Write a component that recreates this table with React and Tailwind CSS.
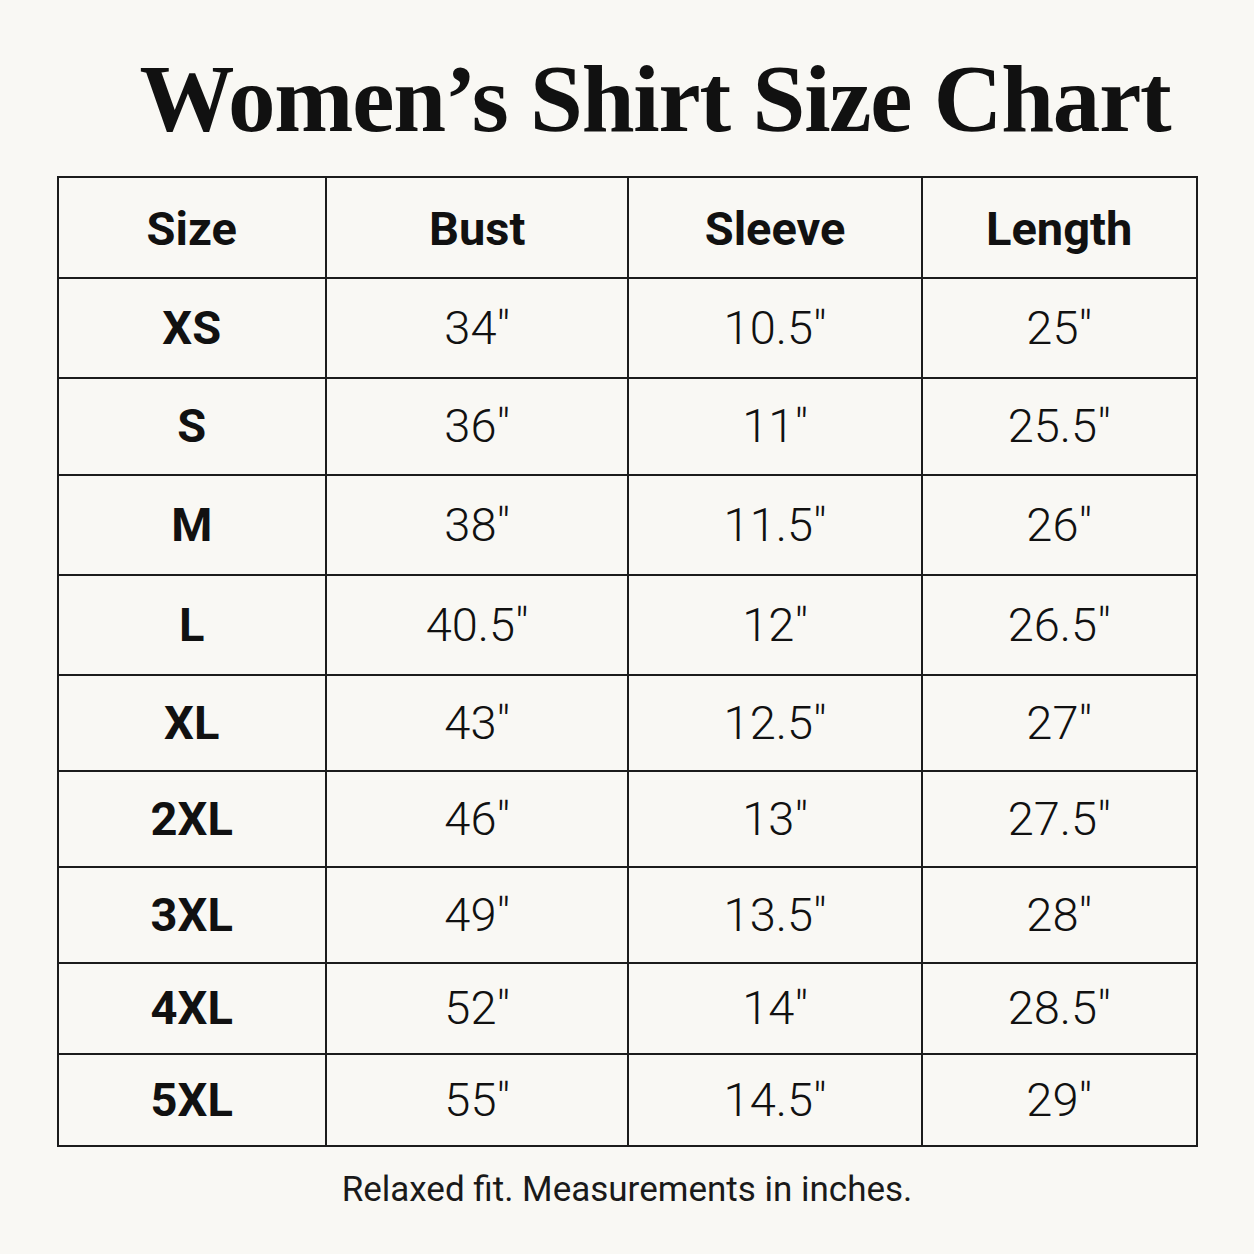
const rows = [
  ['XS', '34″', '10.5″', '25″'],
  ['S', '36″', '11″', '25.5″'],
  ['M', '38″', '11.5″', '26″'],
  ['L', '40.5″', '12″', '26.5″'],
  ['XL', '43″', '12.5″', '27″'],
  ['2XL', '46″', '13″', '27.5″'],
  ['3XL', '49″', '13.5″', '28″'],
  ['4XL', '52″', '14″', '28.5″'],
  ['5XL', '55″', '14.5″', '29″'],
];

const heights = ['h-[100px]', 'h-[97px]', 'h-[100px]', 'h-[100px]', 'h-[96px]', 'h-[96px]', 'h-[96px]', 'h-[91px]', 'h-[92px]'];

export default function App() {
  return (
    <div className="w-[1254px] h-[1254px] bg-[#f9f8f4] text-[#111] flex flex-col items-center">
      <h1
        className="pt-[52px] pl-[56px] text-[95px] leading-none font-bold tracking-[-1.2px]"
        style={{ fontFamily: '"Liberation Serif", serif' }}
      >
        Women’s Shirt Size Chart
      </h1>

      <table
        className="mt-[29px] w-[1141px] border-collapse border-2 border-[#1c1c1c] text-center"
        style={{ fontFamily: 'Roboto, sans-serif' }}
      >
        <colgroup>
          <col className="w-[269px]" />
          <col className="w-[303px]" />
          <col className="w-[294px]" />
          <col className="w-[275px]" />
        </colgroup>
        <thead>
          <tr className="h-[101px] text-[47px] font-bold">
            <th className="border-2 border-[#1c1c1c] pt-[4px] font-bold">Size</th>
            <th className="border-2 border-[#1c1c1c] pt-[4px] font-bold">Bust</th>
            <th className="border-2 border-[#1c1c1c] pt-[4px] font-bold">Sleeve</th>
            <th className="border-2 border-[#1c1c1c] pt-[4px] font-bold">Length</th>
          </tr>
        </thead>
        <tbody>
          {rows.map((r, i) => (
            <tr key={r[0]} className={heights[i] + ' text-[47px]'}>
              <td className="border-2 border-[#1c1c1c] font-bold">{r[0]}</td>
              <td className="border-2 border-[#1c1c1c] font-light">{r[1]}</td>
              <td className="border-2 border-[#1c1c1c] font-light">{r[2]}</td>
              <td className="border-2 border-[#1c1c1c] font-light">{r[3]}</td>
            </tr>
          ))}
        </tbody>
      </table>

      <p
        className="mt-[25px] text-[35px] leading-none text-[#1a1a1a]"
        style={{ fontFamily: 'Roboto, sans-serif' }}
      >
        Relaxed fit. Measurements in inches.
      </p>
    </div>
  );
}
